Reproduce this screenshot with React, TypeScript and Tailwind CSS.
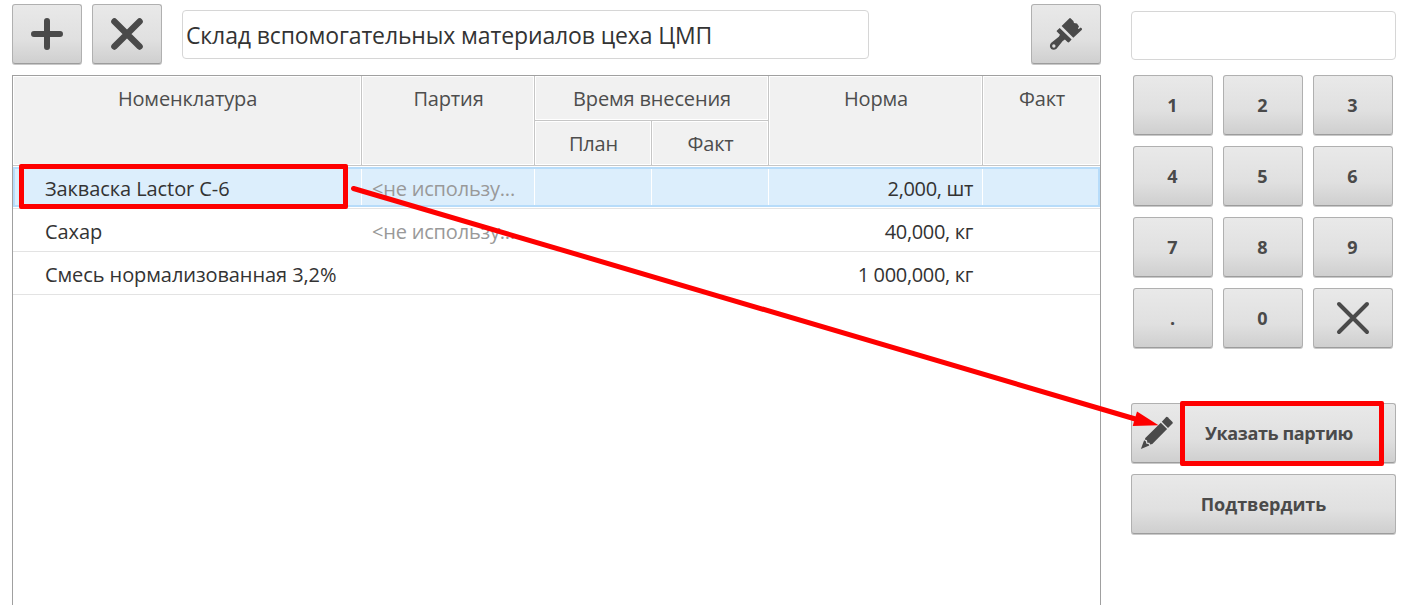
import type { ReactNode } from "react";

type Item = { name: string; batch: string; norm: string; selected?: boolean };

const items: Item[] = [
  { name: "Закваска Lactor C-6", batch: "<не использу...", norm: "2,000, шт", selected: true },
  { name: "Сахар", batch: "<не использу...", norm: "40,000, кг" },
  { name: "Смесь нормализованная 3,2%", batch: "", norm: "1 000,000, кг" },
];

const keys = ["1", "2", "3", "4", "5", "6", "7", "8", "9", ".", "0"];

function Button({ className = "", children, label }: { className?: string; children: ReactNode; label?: string }) {
  return (
    <button
      aria-label={label}
      className={`flex items-center justify-center rounded-[3px] border border-[#b0b0b0] border-b-[#9c9c9c] bg-linear-to-b from-[#e9e9e9] via-[#e0e0e0] via-60% to-[#cfcfcf] text-[18px] font-bold text-[#4a4a4a] shadow-[0_1px_0_#c9c9c9] ${className}`}
    >
      {children}
    </button>
  );
}

function HeaderCell({ className = "", children }: { className?: string; children: ReactNode }) {
  return (
    <div className={`border-r border-b border-[#c6c6c6] bg-white p-px ${className}`}>
      <div className="h-full bg-[#f1f1f1] pl-px text-center leading-[43px] tracking-[-0.15px] text-[#4d4d4d]">{children}</div>
    </div>
  );
}

function Row({ item }: { item: Item }) {
  const cell = item.selected ? "border-r border-white" : "border-r border-transparent";
  return (
    <div className="relative h-[43px] border-b border-[#e3e3e3] pt-px pb-px">
      <div className={`grid h-full grid-cols-[349px_173px_117px_117px_214px_117px] grid-rows-[40px] leading-[44px] text-[#333] ${item.selected ? "bg-[#dceefc]" : ""}`}>
        <div className={`${cell} pl-[32px] tracking-[-0.08px]`}>{item.name}</div>
        <div className={`${cell} pl-[10px] tracking-[-0.2px] text-[#999]`}>{item.batch}</div>
        <div className={cell} />
        <div className={cell} />
        <div className={`${cell} pr-[9px] text-right tracking-[-0.34px]`}>{item.norm}</div>
        <div />
      </div>
      {item.selected && <div className="absolute inset-x-0 top-px bottom-px border-2 border-[#b7dcfa]" />}
    </div>
  );
}

function BrushIcon() {
  return (
    <svg width="34" height="34" viewBox="0 0 34 34" fill="#4a4a4a">
      <path d="M21.5 1.2 L24.4 4 L25 6 L28 6.4 L30 9.5 L28.9 11.6 L29.7 12.1 L31.7 10.4 L32.9 11.5 Q33.4 12.2 32.7 12.9 L24.3 20.7 L12.6 9 L20.5 1.3 Q21 .8 21.5 1.2Z" />
      <path d="M10.7 11 L22.6 22.6 L20 25.3 Q19.2 25.7 18.5 25 L15.9 22.5 L13.7 24 L7.5 31.7 Q4.8 33.8 2.2 32 Q-.3 29 2 26 L9.8 19.8 L11 17.8 L7.8 14.5 Q7.5 13.9 8 13.4 Z M4.8 27.3 A1.7 1.7 0 1 0 4.9 30.7 A1.7 1.7 0 1 0 4.8 27.3Z" fillRule="evenodd" />
    </svg>
  );
}

function PencilIcon() {
  return (
    <svg width="34" height="34" viewBox="0 0 34 34" fill="#4a4a4a">
      <path d="M26.2 1.1 Q27 .5 27.7 1.2 L32.5 6 Q33.1 6.8 32.5 7.5 L28 12 L21.8 5.8Z" />
      <path d="M20.8 6.7 L27.1 12.9 L12.3 28 L10.2 28.4 L9.4 26.8 L7.4 26.7 L7 24.3 L4.9 23.4 L5.3 22.1Z" />
      <path d="M4.1 24.2 L5.8 25.3 L6.4 27.7 L8.5 27.9 L9.3 29.6 L.9 32.9Z" />
    </svg>
  );
}

export default function App() {
  return (
    <div className="relative flex h-[605px] w-[1421px] overflow-hidden bg-white pl-[12px] font-['Open_Sans','Noto_Sans',sans-serif] text-[20px]">
      <main className="flex w-[1089px] flex-col pt-[4px]">
        <div className="flex h-[71px] items-start">
          <Button label="Добавить" className="h-[60px] w-[70px]">
            <svg width="32" height="32" viewBox="0 0 32 32" stroke="#4a4a4a" strokeWidth="6" strokeLinecap="round">
              <path d="M16 3V29M3 16H29" />
            </svg>
          </Button>
          <Button label="Удалить" className="ml-[10px] h-[60px] w-[70px]">
            <svg width="32" height="32" viewBox="0 0 32 32" stroke="#4a4a4a" strokeWidth="6.4" strokeLinecap="round">
              <path d="M3.4 3.4L28.6 28.6M28.6 3.4L3.4 28.6" />
            </svg>
          </Button>
          <div className="mt-[6px] ml-[20px] h-[49px] w-[687px] rounded-[4px] border border-[#d6d6d6] pl-[3px] text-[23px] leading-[49px] tracking-[-0.13px] text-[#333]">
            Склад вспомогательных материалов цеха ЦМП
          </div>
          <Button label="Очистить" className="ml-auto h-[60px] w-[70px]">
            <BrushIcon />
          </Button>
        </div>
        <section className="flex-1 border-x border-t border-[#a0a0a0]">
          <div className="grid grid-cols-[349px_173px_117px_117px_214px_117px] grid-rows-[45px_45px]">
            <HeaderCell className="row-span-2">Номенклатура</HeaderCell>
            <HeaderCell className="row-span-2">Партия</HeaderCell>
            <HeaderCell className="col-span-2">Время внесения</HeaderCell>
            <HeaderCell className="row-span-2">Норма</HeaderCell>
            <HeaderCell className="row-span-2 border-r-0">Факт</HeaderCell>
            <HeaderCell>План</HeaderCell>
            <HeaderCell>Факт</HeaderCell>
          </div>
          {items.map((item) => (
            <Row key={item.name} item={item} />
          ))}
        </section>
      </main>

      <aside className="ml-[30px] flex w-[265px] flex-col pt-[11px]">
        <div className="h-[49px] shrink-0 rounded-[4px] border border-[#d6d6d6]" />
        <div className="mt-[15px] ml-[2px] grid grid-cols-[80px_80px_80px] gap-x-[10px] gap-y-[11px]">
          {keys.map((key) => (
            <Button key={key} className="h-[60px] pr-px">
              {key}
            </Button>
          ))}
          <Button label="Стереть" className="h-[60px]">
            <svg width="34" height="34" viewBox="0 0 34 34" stroke="#4a4a4a" strokeWidth="4" strokeLinecap="round">
              <path d="M3 3L31 31M31 3L3 31" />
            </svg>
          </Button>
        </div>
        <Button className="relative mt-[55px] h-[60px] pl-[31px] tracking-[-0.38px]">
          <span className="absolute top-[12px] left-[8px]">
            <PencilIcon />
          </span>
          Указать партию
        </Button>
        <Button className="mt-[11px] h-[60px]">Подтвердить</Button>
      </aside>

      <div className="absolute top-[164px] left-[19px] h-[45px] w-[329px] rounded-[2px] border-[5px] border-[#fe0000]" />
      <div className="absolute top-[401px] left-[1180px] h-[65px] w-[204px] rounded-[2px] border-[5px] border-[#fe0000]" />
      <svg className="absolute top-0 left-0" width="1421" height="605" viewBox="0 0 1421 605">
        <path d="M353.5 188.5L1137 419.5" stroke="#fe0000" strokeWidth="5" strokeLinecap="round" />
        <path d="M1137 411.5L1158.5 425.3L1132.7 426Z" fill="#fe0000" />
      </svg>
    </div>
  );
}
